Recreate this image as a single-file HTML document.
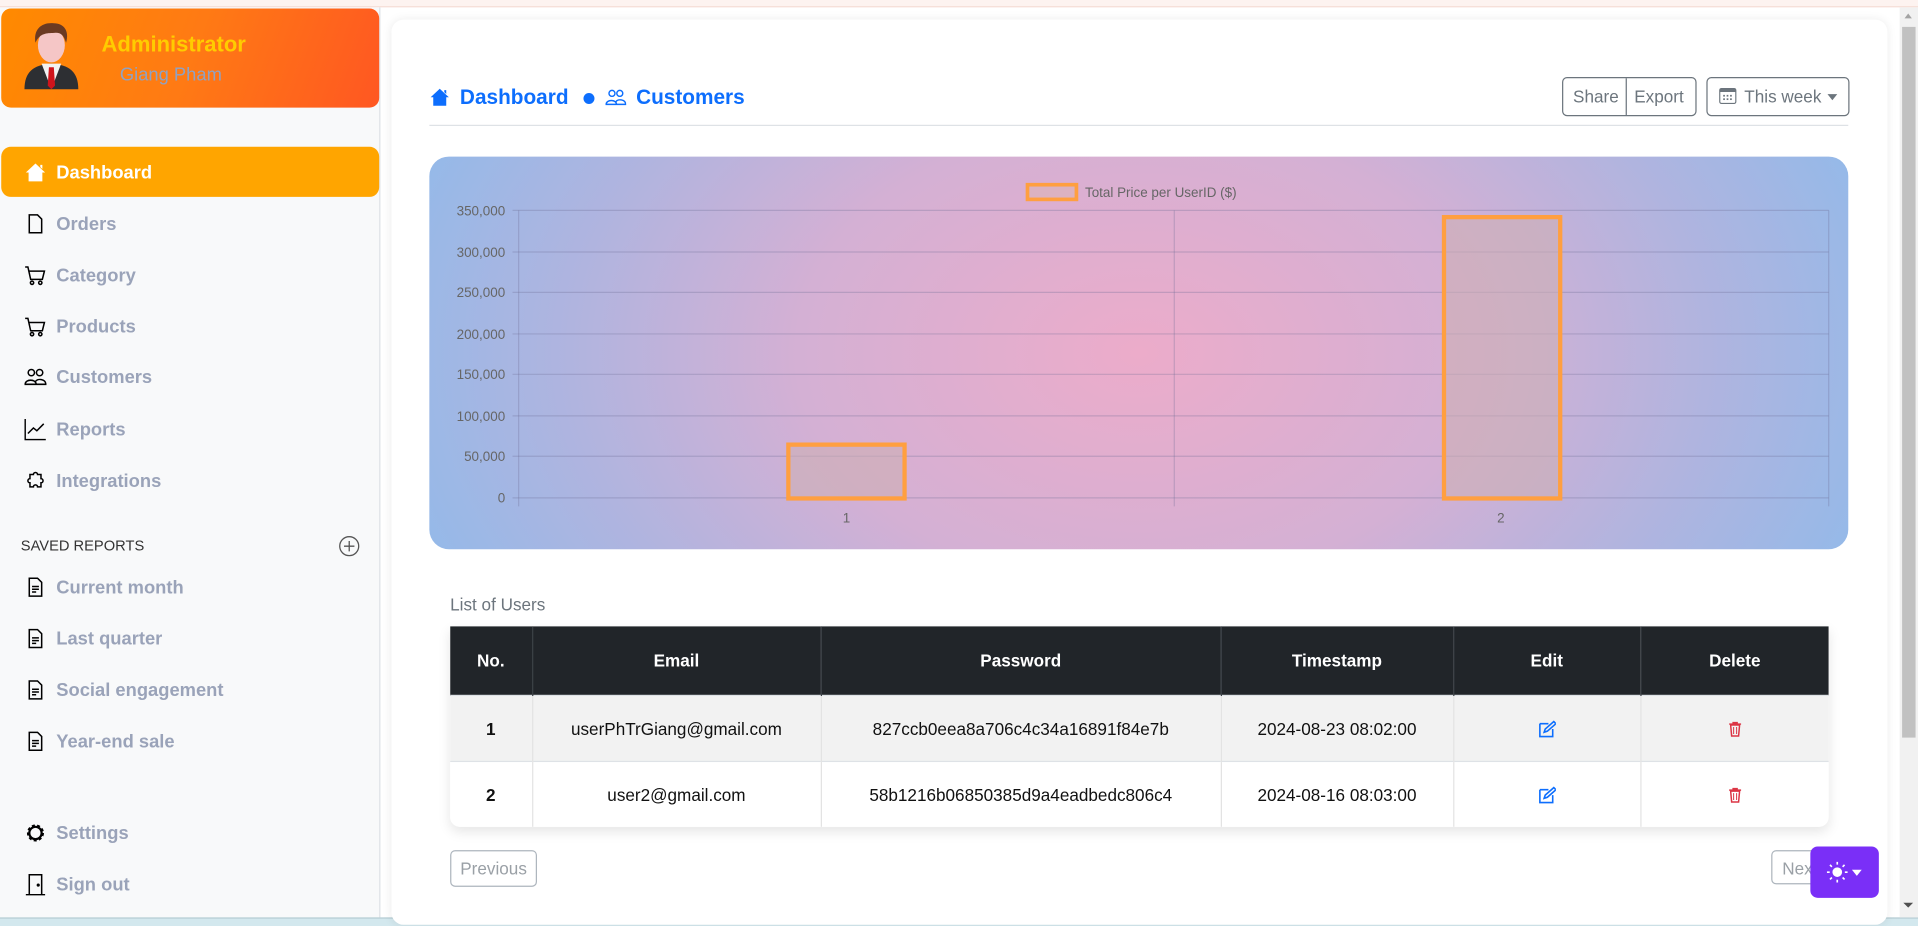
<!DOCTYPE html>
<html><head><meta charset="utf-8"><style>
html,body{margin:0;padding:0;width:1918px;height:926px;overflow:hidden;background:#fff;font-family:"Liberation Sans",sans-serif}
#w{position:absolute;left:0;top:0;width:1568px;height:757px;transform:scale(1.22321);transform-origin:0 0;overflow:hidden;background:#fff}
.a{position:absolute}
.nav{position:absolute;left:20px;height:20px;display:flex;align-items:center;font-size:15px;font-weight:bold;color:#9aa3b9}
.nav svg{width:18px;height:18px;margin-right:8px;flex:none}
th{background:#212529;color:#fff;font-size:14px;font-weight:bold;height:56px;border-right:1px solid #3a3f44;padding:0}
td{font-size:14px;color:#111;text-align:center;border-right:1px solid #e3e3e3;border-top:1px solid #dee2e6;height:53px;padding:0}
td svg{position:relative;top:2px}
</style></head><body><div id="w">
<div class="a" style="left:0;top:0;width:1568px;height:5px;background:#fdf3f0;border-bottom:1px solid #f5ddd6"></div>
<div class="a" style="left:0;top:6px;width:310px;height:744px;background:#f8f9fa;border-right:1px solid #dee2e6"></div>
<div class="a" style="left:1px;top:7px;width:309px;height:81px;border-radius:8px;background:linear-gradient(110deg,#ff8a00,#ff7a14 50%,#ff5722)"></div>
<svg class="a" style="left:17px;top:15px" width="50" height="60" viewBox="0 0 50 60">
<path d="M3 58 C3 44 10 38 25 37 C40 38 47 44 47 58Z" fill="#2d2f33"/>
<path d="M17 37 L25 58 L33 37Z" fill="#f2f2f2"/>
<path d="M23 40 L27 40 L28 55 L25 58 L22 55Z" fill="#d0141c"/>
<ellipse cx="25" cy="22" rx="11" ry="14" fill="#f5c6c6"/>
<path d="M12 20 C10 8 18 3 27 4 C35 4 40 10 37 20 C35 13 32 11 26 12 C20 12 15 13 12 20Z" fill="#6b3a22"/>
</svg>
<div class="a" style="left:83px;top:26px;font-size:18px;font-weight:bold;color:#ffcc00">Administrator</div>
<div class="a" style="left:98px;top:53px;font-size:15px;color:#8fa2c4">Giang Pham</div>
<div class="a" style="left:1px;top:120px;width:309px;height:41px;border-radius:8px;background:#ffa500"></div>
<div class="nav" style="top:131px;color:#fff"><svg viewBox="0 0 16 16"><path d="M8 1.5 L1 8 h2 v6.5 h10 V8 h2 Z M11.5 2.5 h1.5 v3 l-1.5 -1.4z" fill="#fff"/></svg>Dashboard</div>
<div class="nav" style="top:173px"><svg viewBox="0 0 16 16"><path d="M3.5 1.5 h6 l3 3 v10 h-9 z" fill="none" stroke="#000" stroke-width="1.1"/></svg>Orders</div>
<div class="nav" style="top:215px"><svg viewBox="0 0 16 16" fill="none" stroke="#000" stroke-width="1.1"><path d="M0.5 2 h2 l2 9 h8.5 l1.5 -6 H3.5"/><circle cx="5.5" cy="13.5" r="1.2"/><circle cx="11.5" cy="13.5" r="1.2"/></svg>Category</div>
<div class="nav" style="top:257px"><svg viewBox="0 0 16 16" fill="none" stroke="#000" stroke-width="1.1"><path d="M0.5 2 h2 l2 9 h8.5 l1.5 -6 H3.5"/><circle cx="5.5" cy="13.5" r="1.2"/><circle cx="11.5" cy="13.5" r="1.2"/></svg>Products</div>
<div class="nav" style="top:298px"><svg viewBox="0 0 16 16" fill="none" stroke="#000" stroke-width="1.1"><circle cx="5" cy="5" r="2.3"/><circle cx="11" cy="5" r="2.3"/><path d="M0.5 13.5 c0-4 8-4 8 0z M7.5 13.5 h8 c0-4-6-4.5-7.5-2"/></svg>Customers</div>
<div class="nav" style="top:341px"><svg viewBox="0 0 16 16" fill="none" stroke="#000" stroke-width="1.1"><path d="M0.5 0.5 v15 h15 M2.5 11 l4-4 2.5 2 5-5"/></svg>Reports</div>
<div class="nav" style="top:383px"><svg viewBox="0 0 16 16" fill="none" stroke="#000" stroke-width="1.1"><path d="M4 3.5 h2.5 a1.5 1.5 0 1 1 3 0 H12 v3 a1.5 1.5 0 1 1 0 3 v3 h-2.5 a1.5 1.5 0 1 0 -3 0 H4 v-3 a1.5 1.5 0 1 1 0 -3 z"/></svg>Integrations</div>
<div class="a" style="left:17px;top:439px;font-size:12px;color:#333">SAVED REPORTS</div>
<svg class="a" style="left:277px;top:438px" width="17" height="17" viewBox="0 0 16 16" fill="none" stroke="#555" stroke-width="1"><circle cx="8" cy="8" r="7.3"/><path d="M8 4v8M4 8h8"/></svg>
<div class="nav" style="top:470px"><svg viewBox="0 0 16 16" fill="none" stroke="#000" stroke-width="1.1"><path d="M3.5 1.5 h6 l3 3 v10 h-9 z M5.5 7.5 h5 M5.5 9.5 h5 M5.5 11.5 h3"/></svg>Current month</div>
<div class="nav" style="top:512px"><svg viewBox="0 0 16 16" fill="none" stroke="#000" stroke-width="1.1"><path d="M3.5 1.5 h6 l3 3 v10 h-9 z M5.5 7.5 h5 M5.5 9.5 h5 M5.5 11.5 h3"/></svg>Last quarter</div>
<div class="nav" style="top:554px"><svg viewBox="0 0 16 16" fill="none" stroke="#000" stroke-width="1.1"><path d="M3.5 1.5 h6 l3 3 v10 h-9 z M5.5 7.5 h5 M5.5 9.5 h5 M5.5 11.5 h3"/></svg>Social engagement</div>
<div class="nav" style="top:596px"><svg viewBox="0 0 16 16" fill="none" stroke="#000" stroke-width="1.1"><path d="M3.5 1.5 h6 l3 3 v10 h-9 z M5.5 7.5 h5 M5.5 9.5 h5 M5.5 11.5 h3"/></svg>Year-end sale</div>
<div class="nav" style="top:671px"><svg viewBox="0 0 16 16"><circle cx="8" cy="8" r="5" fill="none" stroke="#000" stroke-width="2.4" stroke-dasharray="2 1.5"/><circle cx="8" cy="8" r="4.5" fill="none" stroke="#000" stroke-width="1.6"/></svg>Settings</div>
<div class="nav" style="top:713px"><svg viewBox="0 0 16 16" fill="none" stroke="#000" stroke-width="1.1"><path d="M1 15.5 h14 M3.5 15.5 V1 h9 v14.5"/><circle cx="10" cy="8.5" r="0.6" fill="#000"/></svg>Sign out</div>
<div class="a" style="left:0;top:750px;width:1568px;height:7px;background:#d3e8ee;border-top:1px solid #b5ccd3"></div>
<div class="a" style="left:320px;top:16px;width:1223px;height:740px;background:#fff;border-radius:10px;box-shadow:0 0 8px rgba(0,0,0,.08)"></div>
<svg class="a" style="left:351px;top:71px" width="17" height="17" viewBox="0 0 16 16"><path d="M8 1.5 L1 8 h2 v6.5 h10 V8 h2 Z M11.5 2.5 h1.5 v3 l-1.5 -1.4z" fill="#0d6efd"/></svg>
<div class="a" style="left:376px;top:70px;font-size:17px;font-weight:bold;color:#0d6efd">Dashboard</div>
<div class="a" style="left:477px;top:76px;width:9px;height:9px;border-radius:50%;background:#0d6efd"></div>
<svg class="a" style="left:495px;top:71px" width="17" height="17" viewBox="0 0 16 16" fill="none" stroke="#0d6efd" stroke-width="1.1"><circle cx="5" cy="5" r="2.3"/><circle cx="11" cy="5" r="2.3"/><path d="M0.5 13.5 c0-4 8-4 8 0z M7.5 13.5 h8 c0-4-6-4.5-7.5-2"/></svg>
<div class="a" style="left:520px;top:70px;font-size:17px;font-weight:bold;color:#0d6efd">Customers</div>
<div class="a" style="left:1277px;top:63px;width:108px;height:30px;border:1px solid #6c757d;border-radius:4px;font-size:14px;color:#6c757d"><span class="a" style="left:8px;top:7px">Share</span><span class="a" style="left:51px;top:0;width:1px;height:30px;background:#6c757d"></span><span class="a" style="left:58px;top:7px">Export</span></div>
<div class="a" style="left:1395px;top:63px;width:115px;height:30px;border:1px solid #6c757d;border-radius:4px;font-size:14px;color:#6c757d">
<svg class="a" style="left:9px;top:7px" width="15" height="15" viewBox="0 0 16 16"><rect x="1" y="1.5" width="14" height="13" rx="1.5" fill="none" stroke="#6c757d"/><rect x="1" y="1.5" width="14" height="3" fill="#6c757d"/><g fill="#6c757d"><rect x="4" y="7" width="1.5" height="1.5"/><rect x="7" y="7" width="1.5" height="1.5"/><rect x="10" y="7" width="1.5" height="1.5"/><rect x="4" y="10" width="1.5" height="1.5"/><rect x="7" y="10" width="1.5" height="1.5"/><rect x="10" y="10" width="1.5" height="1.5"/></g></svg>
<span class="a" style="left:30px;top:7px">This week</span><span class="a" style="left:98px;top:13px;border:4px solid transparent;border-top:5px solid #6c757d"></span></div>
<div class="a" style="left:351px;top:102px;width:1160px;height:1px;background:#dee2e6"></div>
<div class="a" style="left:351px;top:128px;width:1160px;height:321px;border-radius:16px;background:radial-gradient(ellipse 620px 420px at 50% 50%,#ecacca,#d4b0d4 45%,#b0b4df 75%,#96b9e8)"></div>
<svg class="a" style="left:351px;top:128px" width="1160" height="321" font-family="Liberation Sans,sans-serif" font-size="11" fill="#666">
<rect x="489" y="23" width="40" height="12" fill="rgba(220,180,180,.6)" stroke="#ff9f40" stroke-width="3"/>
<text x="536" y="33">Total Price per UserID ($)</text>
<g stroke="rgba(110,110,150,.3)" stroke-width="1">
<line x1="68" y1="44" x2="1144" y2="44"/><line x1="68" y1="78" x2="1144" y2="78"/><line x1="68" y1="111" x2="1144" y2="111"/><line x1="68" y1="145" x2="1144" y2="145"/><line x1="68" y1="178" x2="1144" y2="178"/><line x1="68" y1="212" x2="1144" y2="212"/><line x1="68" y1="245" x2="1144" y2="245"/><line x1="68" y1="279" x2="1144" y2="279"/>
<line x1="73" y1="44" x2="73" y2="286"/><line x1="609" y1="44" x2="609" y2="286"/><line x1="1144" y1="44" x2="1144" y2="286"/></g>
<g text-anchor="end"><text x="62" y="48">350,000</text><text x="62" y="82">300,000</text><text x="62" y="115">250,000</text><text x="62" y="149">200,000</text><text x="62" y="182">150,000</text><text x="62" y="216">100,000</text><text x="62" y="249">50,000</text><text x="62" y="283">0</text></g>
<rect x="293.5" y="235.5" width="95" height="44" fill="rgba(205,175,180,.6)" stroke="#ff9f40" stroke-width="3.5"/>
<rect x="829.5" y="49.5" width="95" height="230" fill="rgba(205,175,180,.6)" stroke="#ff9f40" stroke-width="3.5"/>
<text x="341" y="299" text-anchor="middle">1</text><text x="876" y="299" text-anchor="middle">2</text>
</svg>
<div class="a" style="left:368px;top:486px;font-size:14px;color:#6c757d">List of Users</div>
<div class="a" style="left:368px;top:512px;width:1127px;height:164px;border-radius:0 0 8px 8px;overflow:hidden;box-shadow:0 4px 10px rgba(0,0,0,.1)">
<table style="border-collapse:collapse;width:1127px;table-layout:fixed;font-family:'Liberation Sans',sans-serif">
<colgroup><col style="width:67px"><col style="width:236px"><col style="width:327px"><col style="width:190px"><col style="width:153px"><col style="width:154px"></colgroup>
<tr><th>No.</th><th>Email</th><th>Password</th><th>Timestamp</th><th>Edit</th><th style="border-right:0">Delete</th></tr>
<tr style="background:#f2f2f2"><td style="font-weight:bold">1</td><td>userPhTrGiang@gmail.com</td><td>827ccb0eea8a706c4c34a16891f84e7b</td><td>2024-08-23 08:02:00</td><td><svg width="14" height="14" viewBox="0 0 16 16" fill="none" stroke="#0d6efd" stroke-width="1.5"><path d="M1 3 h8 M1 3 v12 h12 v-7"/><path d="M5 11 l1-3 8-7 2 2 -8 7z"/></svg></td><td style="border-right:0"><svg width="13" height="14" viewBox="0 0 16 16"><path d="M2 3h12M6 3V1.5h4V3" stroke="#dc3545" stroke-width="1.5" fill="none"/><path d="M3.5 4 h9 l-1 11 h-7z" fill="none" stroke="#dc3545" stroke-width="1.5"/><path d="M6.5 6v7M9.5 6v7" stroke="#dc3545"/></svg></td></tr>
<tr style="background:#fff"><td style="font-weight:bold">2</td><td>user2@gmail.com</td><td>58b1216b06850385d9a4eadbedc806c4</td><td>2024-08-16 08:03:00</td><td><svg width="14" height="14" viewBox="0 0 16 16" fill="none" stroke="#0d6efd" stroke-width="1.5"><path d="M1 3 h8 M1 3 v12 h12 v-7"/><path d="M5 11 l1-3 8-7 2 2 -8 7z"/></svg></td><td style="border-right:0"><svg width="13" height="14" viewBox="0 0 16 16"><path d="M2 3h12M6 3V1.5h4V3" stroke="#dc3545" stroke-width="1.5" fill="none"/><path d="M3.5 4 h9 l-1 11 h-7z" fill="none" stroke="#dc3545" stroke-width="1.5"/><path d="M6.5 6v7M9.5 6v7" stroke="#dc3545"/></svg></td></tr>
</table></div>
<div class="a" style="left:368px;top:695px;width:69px;height:28px;border:1px solid #adb5bd;border-radius:4px;font-size:14px;color:#9aa0a6;text-align:center;line-height:28px">Previous</div>
<div class="a" style="left:1448px;top:695px;width:50px;height:28px;border:1px solid #adb5bd;border-radius:4px;font-size:14px;color:#9aa0a6;line-height:28px;padding-left:8px;box-sizing:border-box">Next</div>
<div class="a" style="left:1480px;top:692px;width:56px;height:42px;background:#7a2ff7;border-radius:6px">
<svg class="a" style="left:13px;top:12px" width="18" height="18" viewBox="0 0 16 16"><circle cx="8" cy="8" r="3.5" fill="#fff"/><g stroke="#fff" stroke-width="1.2"><path d="M8 0.5v2M8 13.5v2M0.5 8h2M13.5 8h2M2.7 2.7l1.4 1.4M11.9 11.9l1.4 1.4M2.7 13.3l1.4-1.4M11.9 4.1l1.4-1.4"/></g></svg>
<span class="a" style="left:34px;top:19px;border:4.5px solid transparent;border-top:5px solid #fff"></span></div>
<div class="a" style="left:1553px;top:6px;width:15px;height:744px;background:#f1f1f1"></div>
<div class="a" style="left:1555px;top:22px;width:11px;height:581px;background:#c1c1c1"></div>
<div class="a" style="left:1557px;top:11px;border:3.5px solid transparent;border-bottom:4px solid #a3a3a3;border-top:0"></div>
<div class="a" style="left:1556px;top:738px;border:4px solid transparent;border-top:4px solid #505050;border-bottom:0"></div>
</div></body></html>
